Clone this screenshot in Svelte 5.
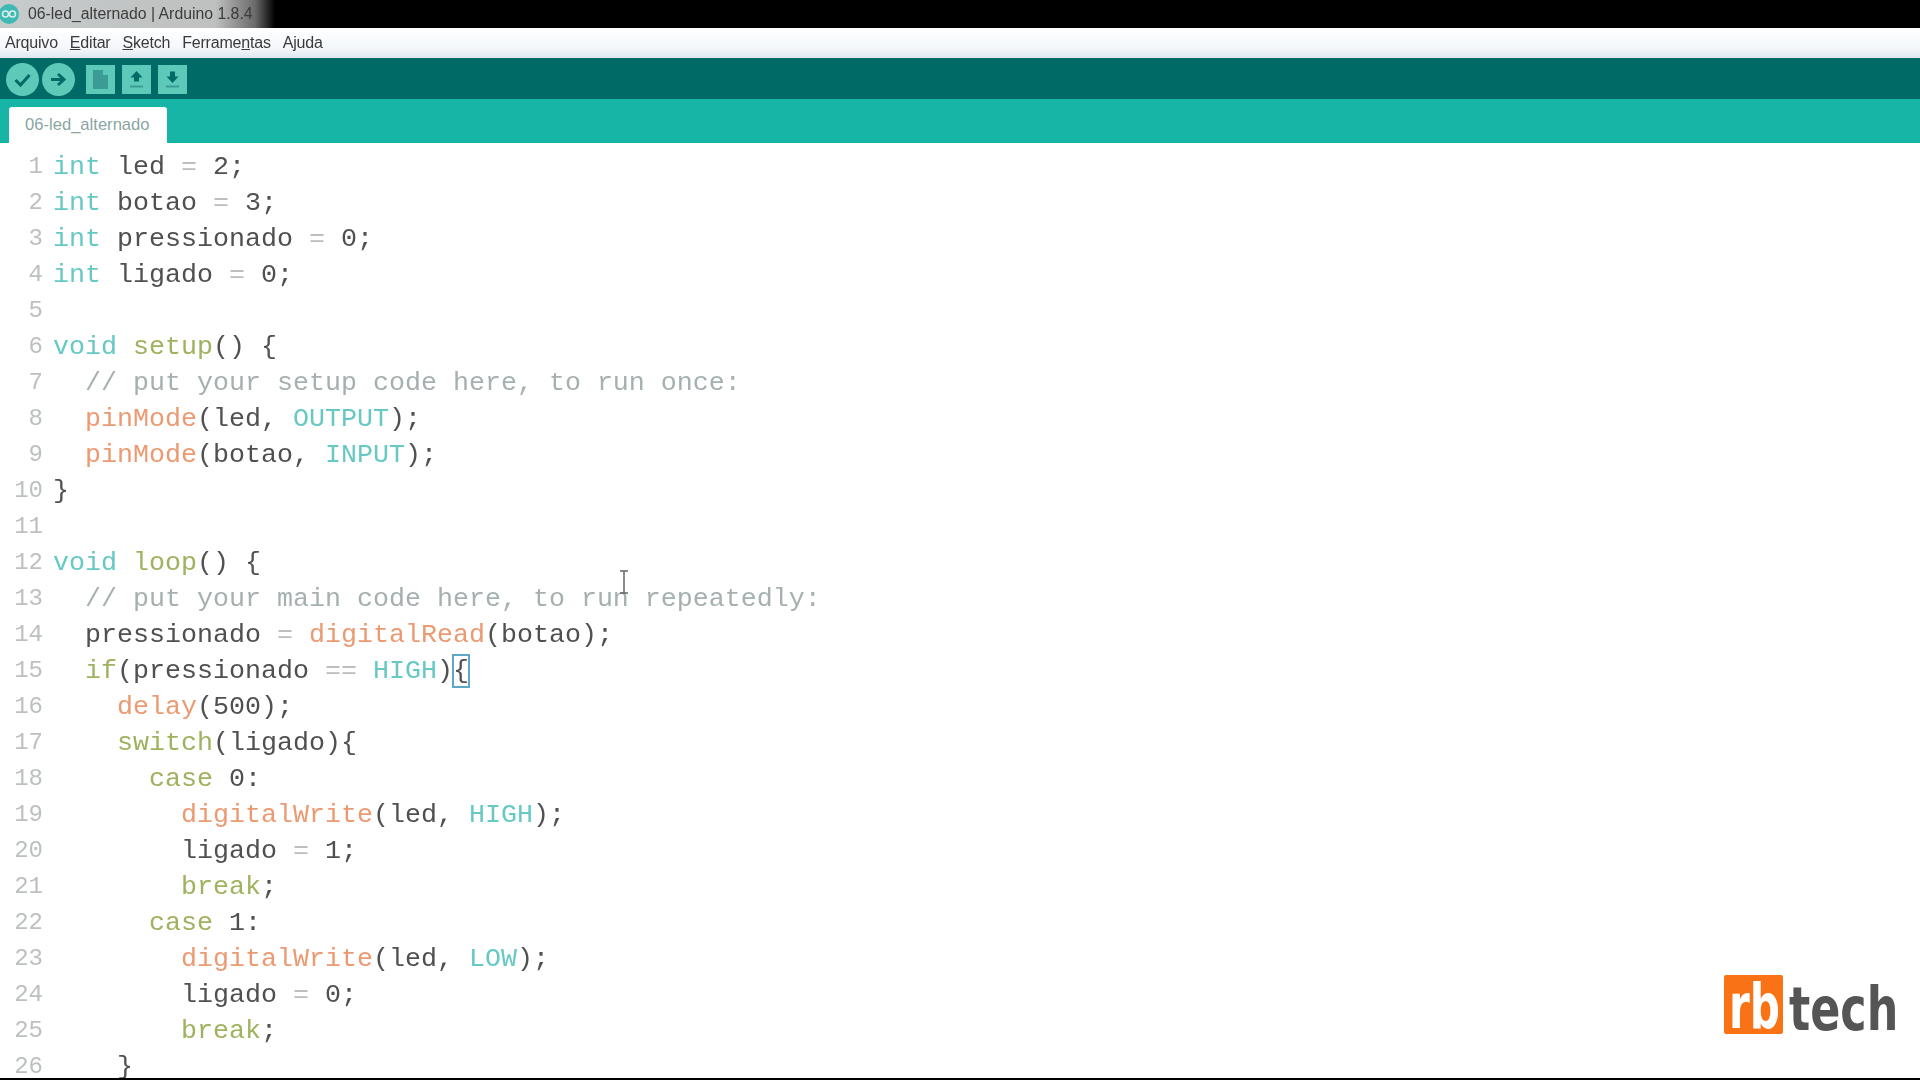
<script lang="ts">
  type Seg = [string, string];

  // k keyword, f function, c control, g comment, o operator, "" plain
  const code: Seg[][] = [
    [["k", "int"], ["", " led "], ["o", "="], ["", " 2;"]],
    [["k", "int"], ["", " botao "], ["o", "="], ["", " 3;"]],
    [["k", "int"], ["", " pressionado "], ["o", "="], ["", " 0;"]],
    [["k", "int"], ["", " ligado "], ["o", "="], ["", " 0;"]],
    [],
    [["k", "void"], ["", " "], ["c", "setup"], ["", "() {"]],
    [["g", "  // put your setup code here, to run once:"]],
    [["", "  "], ["f", "pinMode"], ["", "(led, "], ["k", "OUTPUT"], ["", ");"]],
    [["", "  "], ["f", "pinMode"], ["", "(botao, "], ["k", "INPUT"], ["", ");"]],
    [["", "}"]],
    [],
    [["k", "void"], ["", " "], ["c", "loop"], ["", "() {"]],
    [["g", "  // put your main code here, to run repeatedly:"]],
    [["", "  pressionado "], ["o", "="], ["", " "], ["f", "digitalRead"], ["", "(botao);"]],
    [["", "  "], ["c", "if"], ["", "(pressionado "], ["o", "=="], ["", " "], ["k", "HIGH"], ["", ")"], ["m", "{"]],
    [["", "    "], ["f", "delay"], ["", "(500);"]],
    [["", "    "], ["c", "switch"], ["", "(ligado){"]],
    [["", "      "], ["c", "case"], ["", " 0:"]],
    [["", "        "], ["f", "digitalWrite"], ["", "(led, "], ["k", "HIGH"], ["", ");"]],
    [["", "        ligado "], ["o", "="], ["", " 1;"]],
    [["", "        "], ["c", "break"], ["", ";"]],
    [["", "      "], ["c", "case"], ["", " 1:"]],
    [["", "        "], ["f", "digitalWrite"], ["", "(led, "], ["k", "LOW"], ["", ");"]],
    [["", "        ligado "], ["o", "="], ["", " 0;"]],
    [["", "        "], ["c", "break"], ["", ";"]],
    [["", "    }"]],
  ];
</script>

<div class="window">
  <div class="titlebar">
    <svg class="app-icon" viewBox="0 0 22 22" width="22" height="22">
      <circle cx="10" cy="11" r="10" fill="#3fb9b4" />
      <circle cx="6.5" cy="11" r="3" fill="none" stroke="#d8f0ee" stroke-width="1.6" />
      <circle cx="13.5" cy="11" r="3" fill="none" stroke="#d8f0ee" stroke-width="1.6" />
    </svg>
    <span>06-led_alternado | Arduino 1.8.4</span>
  </div>

  <nav class="menubar">
    <span>Arquivo</span>
    <span><u>E</u>ditar</span>
    <span><u>S</u>ketch</span>
    <span>Ferrame<u>n</u>tas</span>
    <span>A<u>j</u>uda</span>
  </nav>

  <div class="toolbar">
    <button class="round" aria-label="Verificar">
      <svg viewBox="0 0 33 33" width="33" height="33">
        <path d="M9.500 17l5 5 9-10" fill="none" stroke="#006b66" stroke-width="3" />
      </svg>
    </button>
    <button class="round" aria-label="Carregar">
      <svg viewBox="0 0 33 33" width="33" height="33">
        <path d="M9 16.500h12M16 11l6 5.500-6 5.500" fill="none" stroke="#006b66" stroke-width="3" />
      </svg>
    </button>
    <button class="square first" aria-label="Novo">
      <svg viewBox="0 0 29 29" width="29" height="29">
        <path d="M7 5h10l5 5v14H7z" fill="#3b9c95" />
        <path d="M17 5v5h5" fill="#5cc9b9" />
      </svg>
    </button>
    <button class="square" aria-label="Abrir">
      <svg viewBox="0 0 29 29" width="29" height="29">
        <path d="M14.500 6l6 6.500h-3.500v4h-5v-4H8.500z" fill="#006b66" />
        <path d="M8 21.500h13" stroke="#3b9c95" stroke-width="2" />
      </svg>
    </button>
    <button class="square" aria-label="Salvar">
      <svg viewBox="0 0 29 29" width="29" height="29">
        <path d="M14.500 18l6-6.500h-3.500v-5h-5v5H8.500z" fill="#006b66" />
        <path d="M8 21.500h13" stroke="#3b9c95" stroke-width="2" />
      </svg>
    </button>
  </div>

  <div class="tabs">
    <div class="tab">06-led_alternado</div>
  </div>

  <main class="editor">
    {#each code as line, i}
      <div class="line">
        <span class="num">{i + 1}</span>
        <span class="src">{#each line as [cls, text]}<span class={cls}>{text}</span>{/each}</span>
      </div>
    {/each}
  </main>

  <svg class="cursor" viewBox="0 0 10 24" width="10" height="24">
    <path d="M1 1h8M5 1v22M1 23h8" fill="none" stroke="#666" stroke-width="1.500" />
  </svg>

  <div class="logo">
    <span class="rb"><span>rb</span></span>
    <span class="tech"><span>tech</span></span>
  </div>
</div>

<style>
  :global(body) {
    margin: 0;
    background: #fff;
  }
  .window {
    position: relative;
    display: flex;
    flex-direction: column;
    height: 1080px;
    overflow: hidden;
    box-sizing: border-box;
  }
  .titlebar {
    display: flex;
    align-items: center;
    height: 28px;
    flex: none;
    gap: 7px;
    background: linear-gradient(90deg, #c6cbcb 0, #bfc0c0 215px, #6a6a6a 255px, #000 275px);
    color: #3c3c3c;
    font: 15.8px "Liberation Sans", sans-serif;
  }
  .titlebar span {
    filter: blur(0.6px);
  }
  .app-icon {
    margin-left: -1px;
  }
  .menubar {
    display: flex;
    align-items: center;
    flex: none;
    height: 28px;
    margin-top: 2px;
    padding: 0 0 2px 5px;
    box-sizing: border-box;
    gap: 12px;
    background: linear-gradient(180deg, #fff 0, #f2f6fb 70%, #dfe6ee 100%);
    color: #3a3a3a;
    font: 16px "Liberation Sans", sans-serif;
    letter-spacing: -0.2px;
  }
  .menubar span {
    filter: blur(0.6px);
  }
  .toolbar {
    display: flex;
    align-items: center;
    flex: none;
    height: 41px;
    padding: 2px 0 0 6px;
    box-sizing: border-box;
    gap: 3px;
    background: #006b66;
  }
  .toolbar button {
    display: block;
    padding: 0;
    border: 0;
    background: #5cc9b9;
    filter: blur(0.6px);
  }
  .round {
    width: 33px;
    height: 33px;
    border-radius: 50%;
  }
  .square {
    width: 29px;
    height: 29px;
    margin-left: 4px;
  }
  .square.first {
    margin-left: 8px;
  }
  .toolbar svg {
    display: block;
  }
  .tabs {
    display: flex;
    align-items: flex-end;
    flex: none;
    height: 44px;
    padding-left: 9px;
    background: #17b5a6;
  }
  .tab {
    width: 158px;
    height: 36px;
    box-sizing: border-box;
    padding: 8px 0 0 16px;
    border-radius: 3px 3px 0 0;
    background: #fff;
    color: #8aa6a3;
    font: 16.6px "Liberation Sans", sans-serif;
  }
  .editor {
    flex: 1;
    min-height: 0;
    overflow: hidden;
    padding-top: 6px;
    border-bottom: 2px solid #000;
    background: #fff;
    font: 26.67px/36px "Liberation Mono", monospace;
    color: #505050;
    filter: blur(0.75px);
  }
  .line {
    display: flex;
    height: 36px;
  }
  .num {
    width: 43px;
    flex: none;
    text-align: right;
    font-size: 24px;
    color: #bcc0c0;
  }
  .src {
    margin-left: 10px;
    white-space: pre;
  }
  .k {
    color: #66c9c4;
  }
  .f {
    color: #eb9a72;
  }
  .c {
    color: #9fb25f;
  }
  .g {
    color: #a6b0b0;
  }
  .o {
    color: #bdbdbd;
  }
  .m {
    display: inline-block;
    height: 32px;
    line-height: 32px;
    outline: 2px solid #5fa8c4;
    outline-offset: -1px;
  }
  .cursor {
    position: absolute;
    left: 619px;
    top: 570px;
  }
  .logo {
    position: absolute;
    left: 1724px;
    top: 975px;
    display: flex;
    align-items: flex-start;
    gap: 6px;
    filter: blur(0.6px);
  }
  .rb {
    flex: none;
    width: 59px;
    height: 59px;
    background: #f97316;
    border-radius: 2px;
    color: #fff;
  }
  .rb span {
    display: block;
    height: 59px;
    overflow: visible;
    padding-left: 5px;
    transform: scaleX(0.68);
    transform-origin: 5px 0;
    font: bold 62px/63px "DejaVu Sans", sans-serif;
    white-space: nowrap;
  }
  .tech {
    flex: none;
    width: 110px;
    height: 59px;
    color: #555;
  }
  .tech span {
    display: block;
    height: 59px;
    transform: scaleX(0.74);
    transform-origin: 0 0;
    font: bold 60px/68px "DejaVu Sans", sans-serif;
    white-space: nowrap;
  }
</style>
